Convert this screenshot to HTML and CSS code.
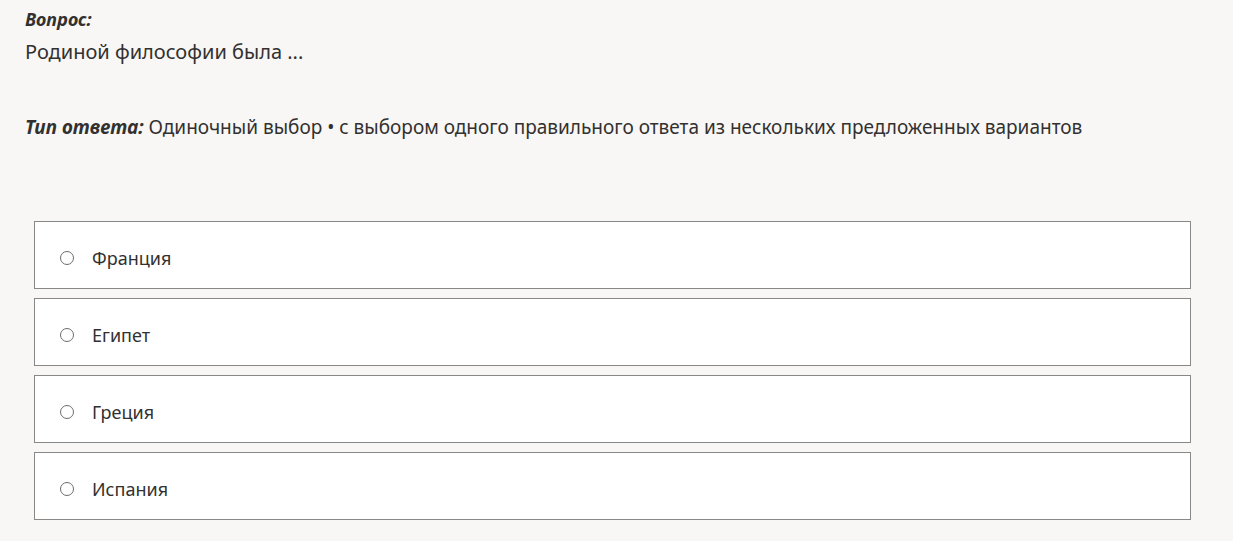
FILE: index.html
```html
<!DOCTYPE html>
<html lang="ru">
<head>
    <meta charset="UTF-8">
    <meta name="viewport" content="width=device-width, initial-scale=1.0">
    <title>Вопрос</title>
    <link rel="stylesheet" href="styles.css">
</head>
<body>
    <div class="question">
        <div class="label">Вопрос:</div>
        <div class="question-text">Родиной философии была ...</div>

        <div class="answer-type"><span class="label">Тип ответа:</span> Одиночный выбор • с выбором одного правильного ответа из нескольких предложенных вариантов</div>

        <div class="options">
            <label class="option"><span class="radio"></span>Франция</label>
            <label class="option"><span class="radio"></span>Египет</label>
            <label class="option"><span class="radio"></span>Греция</label>
            <label class="option"><span class="radio"></span>Испания</label>
        </div>
    </div>
</body>
</html>
```

FILE: styles.css
```css
body {
    font-family: "Noto Sans", "Open Sans", sans-serif;
    margin: 0;
    padding: 0;
    background-color: #f8f7f5;
    color: #323130;
}

.question {
    padding: 8px 25px 0 25px;
}

.label {
    font-weight: bold;
    font-style: italic;
    font-size: 18px;
    line-height: 22px;
}

.question-text {
    font-size: 20px;
    line-height: 30px;
    margin-top: 7px;
}

.answer-type {
    font-size: 19px;
    line-height: 24px;
    margin-top: 48px;
}

.answer-type .label {
    font-size: 19px;
}

.options {
    margin: 82px 17px 0 9px;
    display: flex;
    flex-direction: column;
    gap: 9px;
}

.option {
    box-sizing: border-box;
    display: flex;
    align-items: center;
    height: 68px;
    background-color: #fff;
    border: 1px solid #8a8886;
    padding: 6px 0 0 25px;
    font-size: 18px;
    cursor: pointer;
}

.radio {
    width: 12px;
    height: 12px;
    border: 1px solid #6e6c6a;
    border-radius: 50%;
    margin-right: 18px;
    flex-shrink: 0;
}
```
